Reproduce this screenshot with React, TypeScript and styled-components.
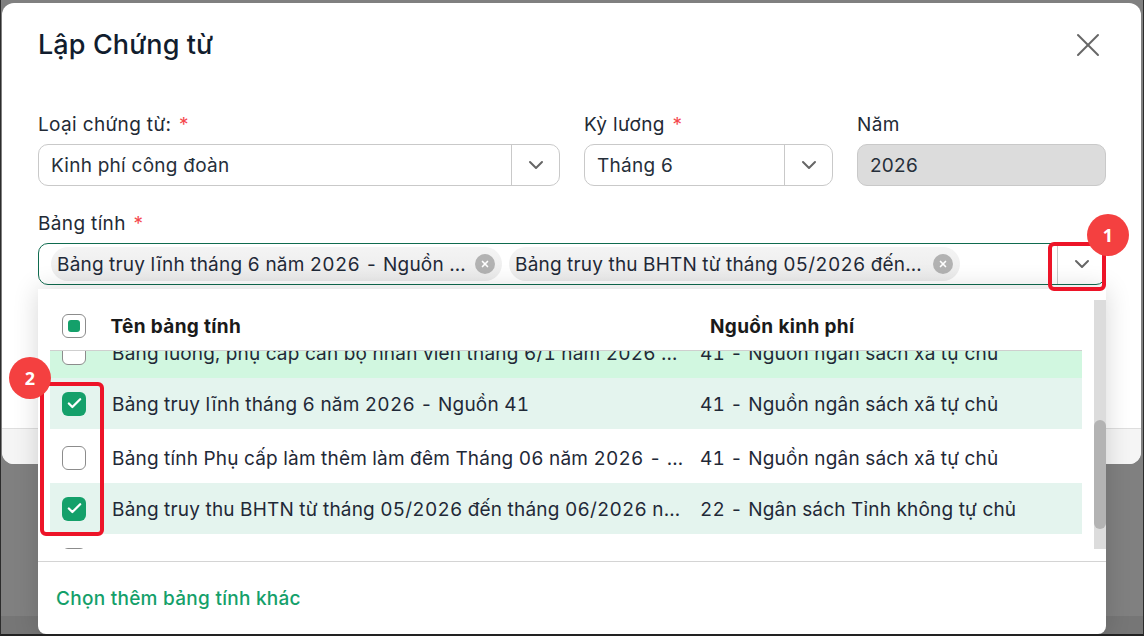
import React, { FunctionComponent } from 'react';
import styled, { createGlobalStyle } from 'styled-components';
import { Check, ChevronDown, X } from 'lucide-react';

const GlobalStyle = createGlobalStyle`
    html, body {
        margin: 0;
        padding: 0;
    }

    body {
        font-family: Inter, "Noto Sans", sans-serif;
        color: #1f2937;
    }
`;

const Page = styled.div`
    position: relative;
    box-sizing: border-box;
    width: 1144px;
    height: 636px;
    padding: 3px 2px 0;
    overflow: hidden;
    background: linear-gradient(#808080 616px, #767676 616px);
    border-left: 1px solid #2c2c2c;
    border-right: 1px solid #2c2c2c;
    border-bottom: 2px solid #222;
`;

const Modal = styled.div`
    display: flex;
    flex-direction: column;
    height: 461px;
    margin-left: -1px;
    border-radius: 12px;
    background: #fff;
`;

const ModalBody = styled.div`
    flex: 1;
    padding: 26px 35px 0 36px;
`;

const ModalFooter = styled.div`
    height: 35px;
    border-radius: 0 0 12px 12px;
    background: #f5f5f5;
    border-top: 1px solid #dedede;
`;

const Header = styled.div`
    display: flex;
    justify-content: space-between;
    align-items: center;
    height: 32px;
    margin-bottom: 52px;
`;

const Title = styled.h1`
    margin: 0;
    font-size: 27px;
    line-height: 32px;
    font-weight: 500;
    letter-spacing: 0.1px;
    color: #111d2e;
`;

const CloseIcon = styled(X)`
    margin: -4px -2px -4px 0;
    color: #666;
`;

const FieldRow = styled.div`
    display: grid;
    grid-template-columns: 522px 249px 249px;
    column-gap: 24px;
    margin-bottom: 26px;
`;

const Field = styled.div`
    position: relative;
`;

const Label = styled.div`
    height: 24px;
    margin-bottom: 7px;
    font-size: 19px;
    line-height: 24px;
    letter-spacing: 0.35px;
    color: #222a35;
`;

const Required = styled.span`
    margin-left: 2px;
    color: #f5474d;
`;

const Control = styled.div<{ $active?: boolean; $disabled?: boolean }>`
    display: flex;
    align-items: center;
    box-sizing: border-box;
    height: 42px;
    border: 1px solid ${p => (p.$active ? '#0f6b4f' : '#c9c9c9')};
    border-radius: 10px;
    background: ${p => (p.$disabled ? '#dcdcdc' : '#fff')};
`;

const Value = styled.div`
    flex: 1;
    padding-left: 12px;
    font-size: 19px;
    letter-spacing: 0.25px;
    color: #262f3a;
`;

const Arrow = styled.div`
    display: flex;
    align-items: center;
    justify-content: center;
    align-self: stretch;
    box-sizing: border-box;
    width: 48px;
    border-left: 1px solid #c9c9c9;
    color: #666;
`;

const Chips = styled.div`
    display: flex;
    flex: 1;
    gap: 7px;
    padding-left: 12px;
`;

const Chip = styled.div`
    display: flex;
    align-items: center;
    box-sizing: border-box;
    width: 451px;
    height: 34px;
    padding: 0 7px 0 6px;
    border-radius: 17px;
    background: linear-gradient(#f4f4f4, #ebebeb);
`;

const ChipText = styled.span`
    flex: 1;
    min-width: 0;
    overflow: hidden;
    white-space: nowrap;
    text-overflow: ellipsis;
    font-size: 19px;
    font-variant-numeric: tabular-nums;
    letter-spacing: 0.2px;
    color: #1f2937;
`;

const ChipClear = styled.span`
    display: flex;
    align-items: center;
    justify-content: center;
    flex: none;
    width: 20px;
    height: 20px;
    margin-left: 8px;
    border-radius: 50%;
    background: #b2b2b2;
    color: #fff;
`;

const Dropdown = styled.div`
    position: absolute;
    top: 77px;
    left: 0;
    right: 0;
    z-index: 2;
    height: 345px;
    border-radius: 0 0 8px 8px;
    background: #fff;
    box-shadow: 0 0 26px rgba(0, 0, 0, 0.16);
`;

const ListArea = styled.div`
    display: flex;
    gap: 12px;
    box-sizing: border-box;
    height: 260px;
    padding: 11px 0 0 12px;
`;

const Table = styled.div`
    display: flex;
    flex: 1;
    flex-direction: column;
    min-width: 0;
`;

const TableHead = styled.div`
    display: flex;
    align-items: center;
    flex: none;
    box-sizing: border-box;
    height: 51px;
    padding: 2px 0 0 12px;
    border-bottom: 1px solid #cfcfcf;
    font-size: 19px;
    font-weight: 700;
    letter-spacing: 0.35px;
    color: #1a1a1a;
`;

const HeadName = styled.div`
    width: 599.5px;
    margin-left: 24.5px;
`;

const TableClip = styled.div`
    flex: 1;
    overflow: hidden;
`;

const Rows = styled.div`
    margin-top: -24px;
`;

const Row = styled.div<{ $tone?: 'hover' | 'selected'; $gap?: number }>`
    display: grid;
    grid-template-columns: 24px 572px 1fr;
    column-gap: 26px;
    align-items: center;
    height: 51px;
    margin-top: ${p => p.$gap ?? 0}px;
    padding-left: 12px;
    background: ${p =>
        p.$tone === 'hover' ? '#d1f7e0' : p.$tone === 'selected' ? '#e4f4ee' : 'transparent'};
    font-size: 19px;
    font-variant-numeric: tabular-nums;
    letter-spacing: 0.2px;
    color: #1f2937;
`;

const RowName = styled.div`
    padding-top: 2px;
    overflow: hidden;
    white-space: nowrap;
    text-overflow: ellipsis;
`;

const RowSource = styled.div`
    margin-left: -10px;
    padding-top: 2px;
    white-space: nowrap;
`;

const Box = styled.span<{ $checked?: boolean }>`
    display: flex;
    align-items: center;
    justify-content: center;
    flex: none;
    box-sizing: border-box;
    width: 24px;
    height: 24px;
    border: ${p => (p.$checked ? 'none' : '1px solid #8c8c8c')};
    border-radius: 6px;
    background: ${p => (p.$checked ? '#14a06a' : '#fff')};
    color: #fff;
`;

const BoxMark = styled.span`
    width: 12px;
    height: 12px;
    border-radius: 3px;
    background: #14a06a;
`;

const ScrollTrack = styled.div`
    flex: none;
    width: 12px;
    background: #dcdcdc;
`;

const ScrollThumb = styled.div`
    height: 109px;
    margin-top: 120px;
    border-radius: 6px;
    background: #b3b3b3;
`;

const DropdownFooter = styled.div`
    display: flex;
    align-items: center;
    box-sizing: border-box;
    height: 73px;
    margin-top: 12px;
    padding: 0 18px 0;
    border-top: 1px solid #d4d4d4;
    font-size: 19px;
    font-weight: 500;
    letter-spacing: 0.27px;
    color: #14a06a;
`;

const Highlight = styled.div<{ $x: number; $y: number; $w: number; $h: number }>`
    position: absolute;
    left: ${p => p.$x}px;
    top: ${p => p.$y}px;
    z-index: 3;
    box-sizing: border-box;
    width: ${p => p.$w}px;
    height: ${p => p.$h}px;
    border: 4px solid #ed1428;
    border-radius: 6px;
`;

const Badge = styled.div<{ $x: number; $y: number }>`
    position: absolute;
    left: ${p => p.$x}px;
    top: ${p => p.$y}px;
    z-index: 4;
    display: flex;
    align-items: center;
    justify-content: center;
    width: 42px;
    height: 42px;
    border-radius: 50%;
    background: #f44040;
    font-family: "Open Sans", sans-serif;
    font-size: 18px;
    font-weight: 700;
    color: #fff;
`;

type SheetRow = {
    name: string;
    source: string;
    checked?: boolean;
    tone?: 'hover' | 'selected';
    gap?: number;
};

const rows: SheetRow[] = [
    {
        name: 'Bảng lương, phụ cấp cán bộ nhân viên tháng 6/1 năm 2026 - Nguồn 41',
        source: '41 - Nguồn ngân sách xã tự chủ',
        tone: 'hover',
    },
    {
        name: 'Bảng truy lĩnh tháng 6 năm 2026 - Nguồn 41',
        source: '41 - Nguồn ngân sách xã tự chủ',
        checked: true,
        tone: 'selected',
    },
    {
        name: 'Bảng tính Phụ cấp làm thêm làm đêm Tháng 06 năm 2026 - Nguồn 41',
        source: '41 - Nguồn ngân sách xã tự chủ',
        gap: 3,
    },
    {
        name: 'Bảng truy thu BHTN từ tháng 05/2026 đến tháng 06/2026 nguồn 22',
        source: '22 - Ngân sách Tỉnh không tự chủ',
        checked: true,
        tone: 'selected',
    },
    {
        name: 'Bảng lương tháng 6 năm 2026',
        source: '22 - Ngân sách Tỉnh không tự chủ',
    },
];

const chips = [
    'Bảng truy lĩnh tháng 6 năm 2026 - Nguồn 41 xã tự chủ',
    'Bảng truy thu BHTN từ tháng 05/2026 đến tháng 06/2026',
];

const App: FunctionComponent = () => (
    <Page>
        <GlobalStyle />
        <Modal>
            <ModalBody>
                <Header>
                    <Title>Lập Chứng từ</Title>
                    <CloseIcon size={40} strokeWidth={1.2} />
                </Header>

                <FieldRow>
                    <Field>
                        <Label>
                            Loại chứng từ: <Required>*</Required>
                        </Label>
                        <Control>
                            <Value>Kinh phí công đoàn</Value>
                            <Arrow>
                                <ChevronDown size={24} strokeWidth={2} />
                            </Arrow>
                        </Control>
                    </Field>
                    <Field>
                        <Label>
                            Kỳ lương <Required>*</Required>
                        </Label>
                        <Control>
                            <Value>Tháng 6</Value>
                            <Arrow>
                                <ChevronDown size={24} strokeWidth={2} />
                            </Arrow>
                        </Control>
                    </Field>
                    <Field>
                        <Label>Năm</Label>
                        <Control $disabled>
                            <Value>2026</Value>
                        </Control>
                    </Field>
                </FieldRow>

                <Field>
                    <Label>
                        Bảng tính <Required>*</Required>
                    </Label>
                    <Control $active>
                        <Chips>
                            {chips.map(chip => (
                                <Chip key={chip}>
                                    <ChipText>{chip}</ChipText>
                                    <ChipClear>
                                        <X size={10} strokeWidth={4} />
                                    </ChipClear>
                                </Chip>
                            ))}
                        </Chips>
                        <Arrow>
                            <ChevronDown size={24} strokeWidth={2} />
                        </Arrow>
                    </Control>

                    <Dropdown>
                        <ListArea>
                            <Table>
                                <TableHead>
                                    <Box>
                                        <BoxMark />
                                    </Box>
                                    <HeadName>Tên bảng tính</HeadName>
                                    <div>Nguồn kinh phí</div>
                                </TableHead>
                                <TableClip>
                                    <Rows>
                                        {rows.map(row => (
                                            <Row key={row.name} $tone={row.tone} $gap={row.gap}>
                                                <Box $checked={row.checked}>
                                                    {row.checked && <Check size={17} strokeWidth={3.2} />}
                                                </Box>
                                                <RowName>{row.name}</RowName>
                                                <RowSource>{row.source}</RowSource>
                                            </Row>
                                        ))}
                                    </Rows>
                                </TableClip>
                            </Table>
                            <ScrollTrack>
                                <ScrollThumb />
                            </ScrollTrack>
                        </ListArea>
                        <DropdownFooter>Chọn thêm bảng tính khác</DropdownFooter>
                    </Dropdown>
                </Field>
            </ModalBody>
            <ModalFooter />
        </Modal>

        <Highlight $x={1047} $y={242} $w={58} $h={49} />
        <Badge $x={1086} $y={214}>1</Badge>
        <Highlight $x={39} $y={382} $w={64} $h={154} />
        <Badge $x={8} $y={357}>2</Badge>
    </Page>
);

export default App;
